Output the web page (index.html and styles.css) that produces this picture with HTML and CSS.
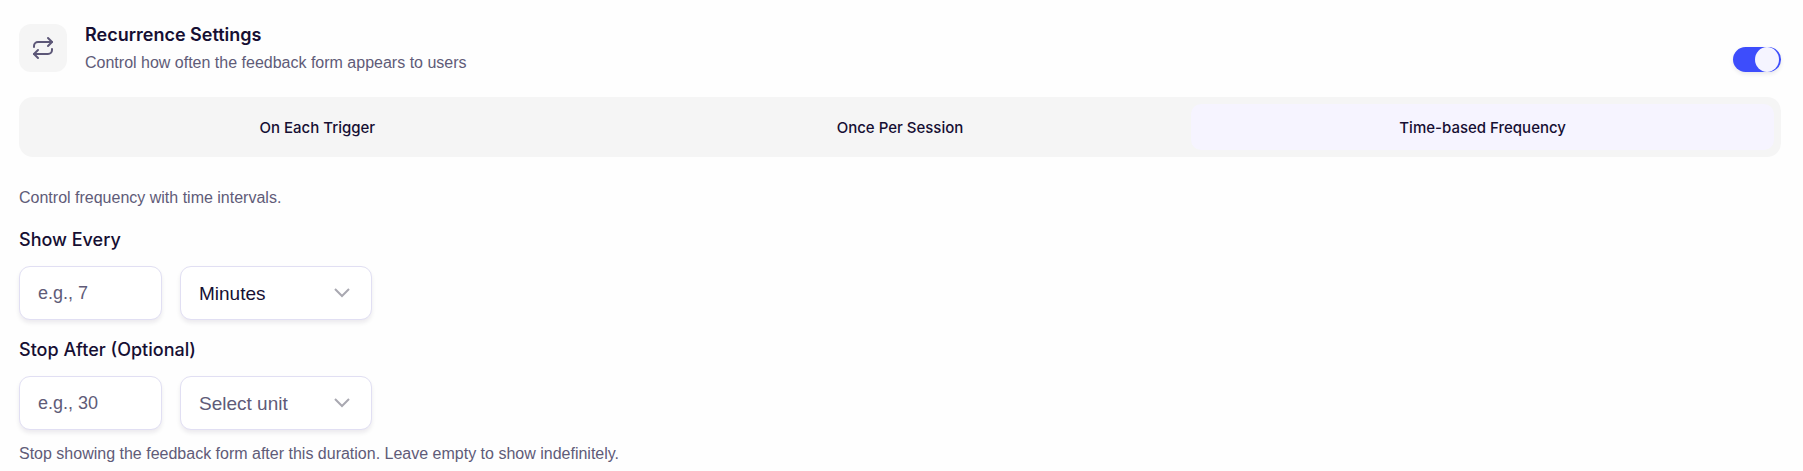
FILE: index.html
```
<!DOCTYPE html>
<html lang="en">
<head>
<meta charset="utf-8">
<title>Recurrence Settings</title>
<link rel="stylesheet" href="styles.css">
</head>
<body>
<main class="panel">
  <header class="panel-header">
    <span class="icon-tile">
      <svg class="icon" viewBox="0 0 24 24" aria-hidden="true"><path d="m17 2 4 4-4 4"/><path d="M3 11v-1a4 4 0 0 1 4-4h14"/><path d="m7 22-4-4 4-4"/><path d="M21 13v1a4 4 0 0 1-4 4H3"/></svg>
    </span>
    <div class="heading">
      <h1 class="title">Recurrence Settings</h1>
      <p class="subtitle">Control how often the feedback form appears to users</p>
    </div>
    <input class="switch" type="checkbox" role="switch" aria-label="Recurrence" checked>
  </header>

  <div class="tabs" role="tablist">
    <button class="tab" type="button" role="tab" aria-selected="false">On Each Trigger</button>
    <button class="tab" type="button" role="tab" aria-selected="false">Once Per Session</button>
    <button class="tab tab-active" type="button" role="tab" aria-selected="true">Time-based Frequency</button>
  </div>

  <section class="frequency">
    <p class="note">Control frequency with time intervals.</p>
    <div class="field">
      <label class="label" for="every">Show Every</label>
      <div class="controls">
        <input class="control amount" id="every" type="text" inputmode="numeric" placeholder="e.g., 7">
        <div class="select-wrap">
          <select class="control unit" aria-label="Show every unit">
            <option>Minutes</option>
            <option>Hours</option>
            <option>Days</option>
          </select>
          <svg class="chevron" viewBox="0 0 16 16" aria-hidden="true"><path d="m1 4 7 7 7-7"/></svg>
        </div>
      </div>
    </div>
    <div class="field">
      <label class="label" for="stop">Stop After (Optional)</label>
      <div class="controls">
        <input class="control amount" id="stop" type="text" inputmode="numeric" placeholder="e.g., 30">
        <div class="select-wrap">
          <select class="control unit unit-empty" aria-label="Stop after unit">
            <option>Select unit</option>
            <option>Minutes</option>
            <option>Hours</option>
            <option>Days</option>
          </select>
          <svg class="chevron" viewBox="0 0 16 16" aria-hidden="true"><path d="m1 4 7 7 7-7"/></svg>
        </div>
      </div>
      <p class="note">Stop showing the feedback form after this duration. Leave empty to show indefinitely.</p>
    </div>
  </section>
</main>
</body>
</html>
```
FILE: styles.css
```
* { box-sizing: border-box; }

body {
  margin: 0;
  background: #fefefe;
  color: #160f33;
  font-family: Inter, "Liberation Sans", sans-serif;
  font-size: 18px;
}

h1, p { margin: 0; }

button, input, select { font: inherit; color: inherit; }

.panel { padding: 24px 22px 4px 19px; }

.panel-header {
  display: flex;
  align-items: flex-start;
  gap: 18px;
  margin-bottom: 22px;
}

.icon-tile {
  display: grid;
  place-items: center;
  width: 48px;
  height: 48px;
  border-radius: 12px;
  background: #f5f5f5;
}

.icon {
  width: 24px;
  height: 24px;
  fill: none;
  stroke: #5c5777;
  stroke-width: 2;
  stroke-linecap: round;
  stroke-linejoin: round;
}

.heading {
  display: grid;
  flex: 1;
  gap: 5px;
}

.title {
  font-size: 18px;
  font-weight: 600;
  line-height: 22px;
}

.subtitle, .note {
  color: #605b78;
  font-family: "Liberation Sans", Arial, sans-serif;
  font-size: 16px;
  line-height: 24px;
}

.switch {
  appearance: none;
  display: flex;
  justify-content: flex-end;
  width: 48px;
  height: 25px;
  margin: 23px 0 0;
  padding: 0 2px;
  border-radius: 13px;
  background: #3d4dfc;
  box-shadow: 0 2px 4px #160f3318;
}

.switch::before {
  content: "";
  width: 24px;
  height: 25px;
  border-radius: 50%;
  background: #f5f4ff;
}

.switch:not(:checked) {
  justify-content: flex-start;
  background: #c9c8d4;
}

.tabs {
  display: grid;
  grid-template-columns: repeat(3, 1fr);
  padding: 7px;
  border-radius: 14px;
  background: #f5f5f5;
}

.tab {
  height: 46px;
  padding: 0;
  border: 0;
  border-radius: 10px;
  background: none;
  font-size: 15px;
  font-weight: 500;
}

.tab-active { background: #f6f4ff; }

.frequency {
  display: grid;
  gap: 18px;
  padding-top: 29px;
}

.label {
  display: block;
  margin-bottom: 14px;
  font-weight: 500;
  line-height: 24px;
}

.controls { display: flex; gap: 18px; }

.control {
  display: block;
  height: 54px;
  padding: 0 18px;
  border: 1px solid #e1dff3;
  border-radius: 11px;
  background: #fff;
  box-shadow: 0 3px 4px #160f3314;
  font-family: "Liberation Sans", Arial, sans-serif;
}

.amount { width: 143px; }

.amount::placeholder { color: #605b78; opacity: 1; }

.select-wrap { position: relative; }

.unit {
  appearance: none;
  width: 192px;
  font-size: 19px;
}

.unit-empty { color: #605b78; }

.chevron {
  position: absolute;
  top: 19px;
  right: 22px;
  width: 16px;
  height: 16px;
  fill: none;
  stroke: #a9a8b1;
  stroke-width: 2;
  pointer-events: none;
}

.field .note { margin-top: 12px; }
```
